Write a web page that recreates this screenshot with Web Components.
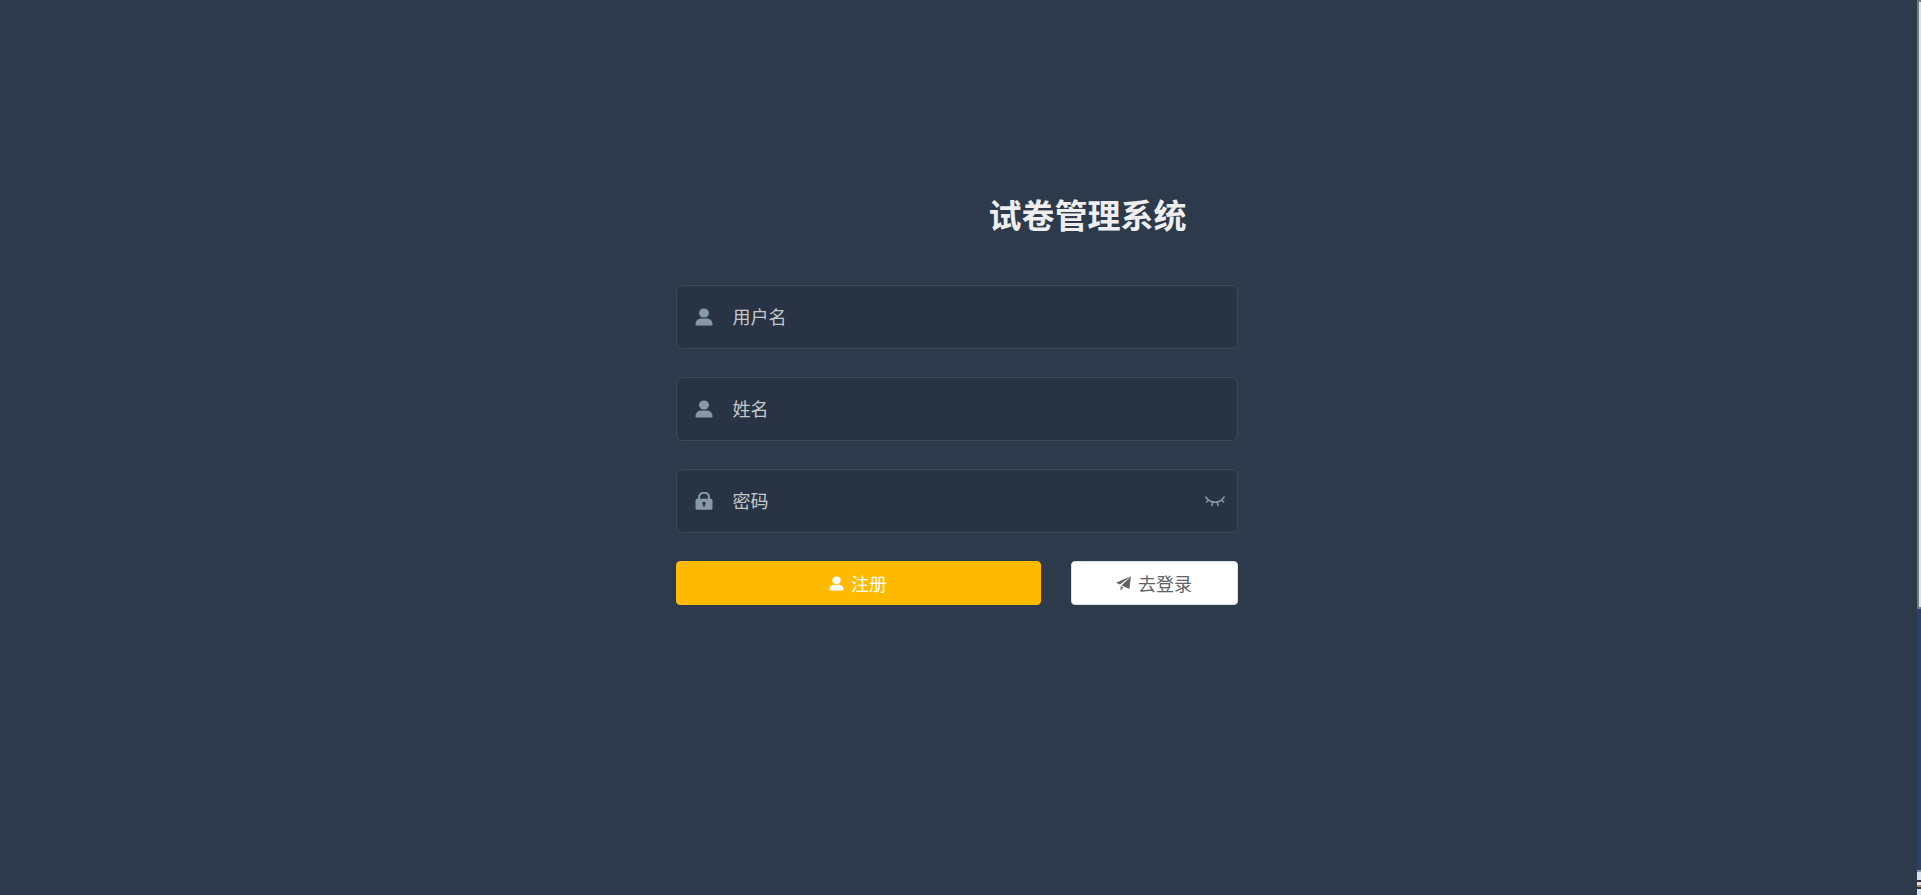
<!DOCTYPE html>
<html lang="zh-CN">
<head>
<meta charset="utf-8">
<meta name="viewport" content="width=device-width, initial-scale=1">
<title>试卷管理系统</title>
<style>
    html, body{
        height: 100%;
        margin: 0;
    }
    body{
        background: #2d3a4b;
        font-family: "Noto Sans CJK SC", sans-serif;
        font-size: 18px;
    }
</style>
</head>
<body>
<register-page></register-page>

<script>
const icons = {
    user: `<svg viewBox="0 0 18 18" fill="currentColor"><ellipse cx="9" cy="5" rx="5" ry="4.500"/><path d="M.5 16.500c0-3.800 2.500-6 6-6h5c3.500 0 6 2.200 6 6 0 .7-.4 1-1 1h-15c-.6 0-1-.3-1-1Z"/></svg>`,
    lock: `<svg viewBox="0 0 18 18" fill="currentColor"><path d="M4 7V5.500C4 2.700 6 .8 9 .8s5 1.900 5 4.700V7" fill="none" stroke="currentColor" stroke-width="2"/><path fill-rule="evenodd" d="M2 6.800h14c.9 0 1.500.6 1.500 1.500v8c0 .9-.6 1.500-1.500 1.500H2c-.9 0-1.500-.6-1.500-1.500v-8c0-.9.6-1.500 1.500-1.500Zm7 3a1.700 1.700 0 0 0-.8 3.200v1.800h1.600V13A1.700 1.700 0 0 0 9 9.800Z"/></svg>`,
    eye: `<svg viewBox="0 0 20 12" fill="none" stroke="currentColor" stroke-width="1.500" stroke-linecap="round"><path d="M.8 2C5.500 9 14.500 9 19.200 2M3.500 5 1.500 7M7.700 7.200 7 10.500M12.300 7.200l.7 3.300M16.500 5l2 2"/></svg>`,
    plane: `<svg viewBox="0 0 14 14" fill="currentColor"><path d="M13.800.3 0 6.200l3.700 1.700Z"/><path d="M14 .3 5.200 8.900l7.300 3.200Z"/><path d="M4.300 9.500v4.300l2.600-3.200Z"/></svg>`
};

class TextField extends HTMLElement {
    constructor(){
        super();
        const root = this.attachShadow({mode: 'open'});
        const type = this.getAttribute('type') || 'text';
        const label = this.getAttribute('label');
        root.innerHTML = `
            <style>
                :host{
                    display: block;
                }
                .field{
                    display: flex;
                    align-items: center;
                    box-sizing: border-box;
                    height: 64px;
                    padding: 0 12px 0 18px;
                    gap: 20px;
                    background: #283443;
                    border: 1px solid #3e4957;
                    border-radius: 6px;
                    color: #889aa4;
                }
                svg{
                    display: block;
                    width: 18px;
                    height: 18px;
                }
                input{
                    flex: 1 1 auto;
                    min-width: 0;
                    height: 48px;
                    padding: 0 0 2px;
                    box-sizing: border-box;
                    border: 0;
                    outline: 0;
                    background: transparent;
                    color: #eee;
                    font: inherit;
                }
                input::placeholder{
                    color: #c5c9ce;
                    opacity: 1;
                }
                button{
                    padding: 0;
                    border: 0;
                    background: transparent;
                    color: inherit;
                    cursor: pointer;
                }
                button svg{
                    width: 20px;
                    height: 12px;
                }
            </style>
            <div class="field">
                <label for="input" aria-label="${label}">${icons[this.getAttribute('icon')]}</label>
                <input id="input" type="${type}" placeholder="${label}" aria-label="${label}">
                ${type === 'password' ? `<button type="button" aria-label="显示密码">${icons.eye}</button>` : ''}
            </div>
        `;
        const toggle = root.querySelector('button');
        if (toggle) {
            const input = root.querySelector('input');
            toggle.addEventListener('click', function(){
                input.type = input.type === 'password' ? 'text' : 'password';
            });
        }
    }
}

class IconButton extends HTMLElement {
    constructor(){
        super();
        const root = this.attachShadow({mode: 'open'});
        root.innerHTML = `
            <style>
                :host{
                    display: block;
                }
                button{
                    display: flex;
                    align-items: center;
                    justify-content: center;
                    gap: 7px;
                    box-sizing: border-box;
                    width: 100%;
                    height: 44px;
                    padding: 0;
                    background: #fff;
                    border: 1px solid #dcdfe6;
                    border-radius: 4px;
                    color: #606266;
                    font: inherit;
                    cursor: pointer;
                }
                :host([primary]) button{
                    background: #ffba00;
                    border-color: #ffba00;
                    color: #fff;
                }
                svg{
                    display: block;
                    width: 15px;
                    height: 15px;
                }
            </style>
            <button type="button">${icons[this.getAttribute('icon')]}<slot></slot></button>
        `;
    }
}

class RegisterPage extends HTMLElement {
    constructor(){
        super();
        const root = this.attachShadow({mode: 'open'});
        root.innerHTML = `
            <style>
                :host{
                    display: flex;
                    min-height: 100%;
                }
                main{
                    flex: 1 1 auto;
                    box-sizing: border-box;
                    padding: 190px 20px 32px 16px;
                }
                form{
                    display: flex;
                    flex-direction: column;
                    gap: 28px;
                    max-width: 562px;
                    margin: 0 auto;
                }
                h1{
                    margin: 0 0 19px;
                    padding-left: 262px;
                    color: #eee;
                    font-size: 33px;
                    line-height: 48px;
                    text-align: center;
                    white-space: nowrap;
                }
                .actions{
                    display: grid;
                    grid-template-columns: 365fr 167fr;
                    gap: 30px;
                }
                .rail{
                    display: flex;
                    flex-direction: column;
                    flex: none;
                    width: 4px;
                    background: #26436f;
                }
                .thumb{
                    flex: 0 0 68%;
                    box-sizing: border-box;
                    background: #d5e2f2;
                    border: solid #77787c;
                    border-width: 2px 0 2px 2px;
                }
                .foot{
                    height: 25px;
                    margin-top: auto;
                    background: linear-gradient(#8c939c 2px, #d5e2f2 2px 10px, #3b2c2c 10px 12px, #d5e2f2 12px 15px, #b98655 15px 17px, #3b2c2c 17px 19px, #d5e2f2 19px);
                }
            </style>
            <main>
                <form>
                    <h1>试卷管理系统</h1>
                    <text-field icon="user" label="用户名"></text-field>
                    <text-field icon="user" label="姓名"></text-field>
                    <text-field icon="lock" label="密码" type="password"></text-field>
                    <div class="actions">
                        <icon-button icon="user" primary>注册</icon-button>
                        <icon-button icon="plane">去登录</icon-button>
                    </div>
                </form>
            </main>
            <div class="rail">
                <div class="thumb"></div>
                <div class="foot"></div>
            </div>
        `;
    }
}

customElements.define('text-field', TextField);
customElements.define('icon-button', IconButton);
customElements.define('register-page', RegisterPage);
</script>
</body>
</html>
